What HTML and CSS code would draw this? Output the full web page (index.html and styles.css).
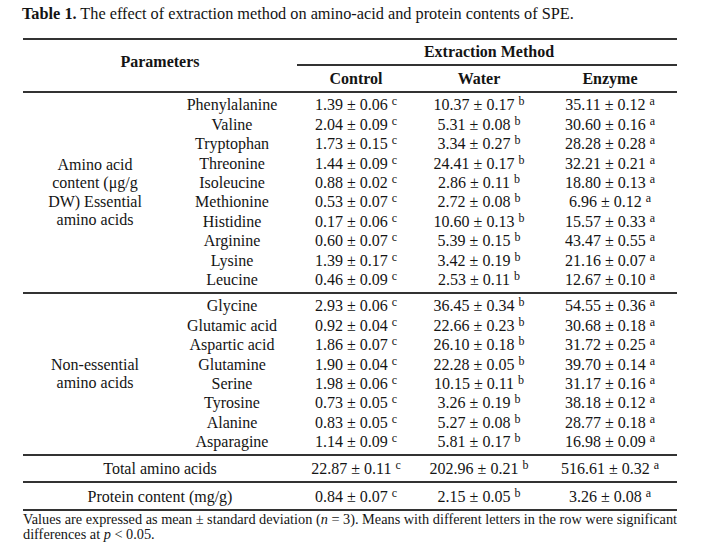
FILE: index.html
```html
<!DOCTYPE html>
<html lang="en">
<head>
    <meta charset="UTF-8">
    <title>Table 1</title>
    <link rel="stylesheet" href="styles.css">
</head>
<body>
    <div class="page">
        <p class="caption"><b>Table 1.</b> The effect of extraction method on amino-acid and protein contents of SPE.</p>

        <table class="data">
            <colgroup>
                <col class="c-group">
                <col class="c-name">
                <col class="c-control">
                <col class="c-water">
                <col class="c-enzyme">
            </colgroup>
            <thead>
                <tr class="head-top">
                    <th colspan="2" rowspan="2" class="params">Parameters</th>
                    <th colspan="3" class="method">Extraction Method</th>
                </tr>
                <tr class="head-sub">
                    <th>Control</th>
                    <th>Water</th>
                    <th>Enzyme</th>
                </tr>
            </thead>
            <tbody class="group-block">
                <tr class="first">
                    <td rowspan="10" class="group">Amino acid<br>content (&mu;g/g<br>DW) Essential<br>amino acids</td>
                    <td>Phenylalanine</td>
                    <td>1.39 &plusmn; 0.06 <sup>c</sup></td>
                    <td>10.37 &plusmn; 0.17 <sup>b</sup></td>
                    <td>35.11 &plusmn; 0.12 <sup>a</sup></td>
                </tr>
                <tr>
                    <td>Valine</td>
                    <td>2.04 &plusmn; 0.09 <sup>c</sup></td>
                    <td>5.31 &plusmn; 0.08 <sup>b</sup></td>
                    <td>30.60 &plusmn; 0.16 <sup>a</sup></td>
                </tr>
                <tr>
                    <td>Tryptophan</td>
                    <td>1.73 &plusmn; 0.15 <sup>c</sup></td>
                    <td>3.34 &plusmn; 0.27 <sup>b</sup></td>
                    <td>28.28 &plusmn; 0.28 <sup>a</sup></td>
                </tr>
                <tr>
                    <td>Threonine</td>
                    <td>1.44 &plusmn; 0.09 <sup>c</sup></td>
                    <td>24.41 &plusmn; 0.17 <sup>b</sup></td>
                    <td>32.21 &plusmn; 0.21 <sup>a</sup></td>
                </tr>
                <tr>
                    <td>Isoleucine</td>
                    <td>0.88 &plusmn; 0.02 <sup>c</sup></td>
                    <td>2.86 &plusmn; 0.11 <sup>b</sup></td>
                    <td>18.80 &plusmn; 0.13 <sup>a</sup></td>
                </tr>
                <tr>
                    <td>Methionine</td>
                    <td>0.53 &plusmn; 0.07 <sup>c</sup></td>
                    <td>2.72 &plusmn; 0.08 <sup>b</sup></td>
                    <td>6.96 &plusmn; 0.12 <sup>a</sup></td>
                </tr>
                <tr>
                    <td>Histidine</td>
                    <td>0.17 &plusmn; 0.06 <sup>c</sup></td>
                    <td>10.60 &plusmn; 0.13 <sup>b</sup></td>
                    <td>15.57 &plusmn; 0.33 <sup>a</sup></td>
                </tr>
                <tr>
                    <td>Arginine</td>
                    <td>0.60 &plusmn; 0.07 <sup>c</sup></td>
                    <td>5.39 &plusmn; 0.15 <sup>b</sup></td>
                    <td>43.47 &plusmn; 0.55 <sup>a</sup></td>
                </tr>
                <tr>
                    <td>Lysine</td>
                    <td>1.39 &plusmn; 0.17 <sup>c</sup></td>
                    <td>3.42 &plusmn; 0.19 <sup>b</sup></td>
                    <td>21.16 &plusmn; 0.07 <sup>a</sup></td>
                </tr>
                <tr class="last">
                    <td>Leucine</td>
                    <td>0.46 &plusmn; 0.09 <sup>c</sup></td>
                    <td>2.53 &plusmn; 0.11 <sup>b</sup></td>
                    <td>12.67 &plusmn; 0.10 <sup>a</sup></td>
                </tr>
            </tbody>
            <tbody class="group-block">
                <tr class="first">
                    <td rowspan="8" class="group">Non-essential<br>amino acids</td>
                    <td>Glycine</td>
                    <td>2.93 &plusmn; 0.06 <sup>c</sup></td>
                    <td>36.45 &plusmn; 0.34 <sup>b</sup></td>
                    <td>54.55 &plusmn; 0.36 <sup>a</sup></td>
                </tr>
                <tr>
                    <td>Glutamic acid</td>
                    <td>0.92 &plusmn; 0.04 <sup>c</sup></td>
                    <td>22.66 &plusmn; 0.23 <sup>b</sup></td>
                    <td>30.68 &plusmn; 0.18 <sup>a</sup></td>
                </tr>
                <tr>
                    <td>Aspartic acid</td>
                    <td>1.86 &plusmn; 0.07 <sup>c</sup></td>
                    <td>26.10 &plusmn; 0.18 <sup>b</sup></td>
                    <td>31.72 &plusmn; 0.25 <sup>a</sup></td>
                </tr>
                <tr>
                    <td>Glutamine</td>
                    <td>1.90 &plusmn; 0.04 <sup>c</sup></td>
                    <td>22.28 &plusmn; 0.05 <sup>b</sup></td>
                    <td>39.70 &plusmn; 0.14 <sup>a</sup></td>
                </tr>
                <tr>
                    <td>Serine</td>
                    <td>1.98 &plusmn; 0.06 <sup>c</sup></td>
                    <td>10.15 &plusmn; 0.11 <sup>b</sup></td>
                    <td>31.17 &plusmn; 0.16 <sup>a</sup></td>
                </tr>
                <tr>
                    <td>Tyrosine</td>
                    <td>0.73 &plusmn; 0.05 <sup>c</sup></td>
                    <td>3.26 &plusmn; 0.19 <sup>b</sup></td>
                    <td>38.18 &plusmn; 0.12 <sup>a</sup></td>
                </tr>
                <tr>
                    <td>Alanine</td>
                    <td>0.83 &plusmn; 0.05 <sup>c</sup></td>
                    <td>5.27 &plusmn; 0.08 <sup>b</sup></td>
                    <td>28.77 &plusmn; 0.18 <sup>a</sup></td>
                </tr>
                <tr class="last">
                    <td>Asparagine</td>
                    <td>1.14 &plusmn; 0.09 <sup>c</sup></td>
                    <td>5.81 &plusmn; 0.17 <sup>b</sup></td>
                    <td>16.98 &plusmn; 0.09 <sup>a</sup></td>
                </tr>
            </tbody>
            <tbody>
                <tr class="summary">
                    <td colspan="2">Total amino acids</td>
                    <td>22.87 &plusmn; 0.11 <sup>c</sup></td>
                    <td>202.96 &plusmn; 0.21 <sup>b</sup></td>
                    <td>516.61 &plusmn; 0.32 <sup>a</sup></td>
                </tr>
                <tr class="summary end">
                    <td colspan="2">Protein content (mg/g)</td>
                    <td>0.84 &plusmn; 0.07 <sup>c</sup></td>
                    <td>2.15 &plusmn; 0.05 <sup>b</sup></td>
                    <td>3.26 &plusmn; 0.08 <sup>a</sup></td>
                </tr>
            </tbody>
        </table>

        <p class="note">Values are expressed as mean &plusmn; standard deviation (<i>n</i> = 3). Means with different letters in the row were significant<br>differences at <i>p</i> &lt; 0.05.</p>
    </div>
</body>
</html>
```

FILE: styles.css
```css
body {
    margin: 0;
    background: #fff;
    color: #141414;
    font-family: "Liberation Serif", "Times New Roman", serif;
}

.page {
    width: 654px;
    padding-left: 23px;
}

.caption {
    margin: 0;
    padding-top: 5px;
    margin-left: -1px;
    font-size: 16.3px;
    line-height: 18px;
    white-space: nowrap;
}

.data {
    width: 654px;
    margin-top: 14.5px;
    border-collapse: separate;
    border-spacing: 0;
    border-top: 2px solid #333;
    font-size: 16px;
    table-layout: fixed;
}

.c-group { width: 144px; }
.c-name { width: 130px; }
.c-control { width: 118px; }
.c-water { width: 128px; }
.c-enzyme { width: 134px; }

.data th,
.data td {
    padding: 0;
    text-align: center;
    white-space: nowrap;
}

.data th {
    font-weight: bold;
    line-height: 19px;
}

.head-top th {
    height: 24.5px;
}

.head-top .params {
    border-bottom: 2px solid #333;
    padding-bottom: 7px;
}

.head-top .method {
    border-bottom: 2px solid #333;
    padding-left: 4px;
}

.head-sub th {
    height: 24.7px;
    border-bottom: 2px solid #333;
}

.group-block td {
    line-height: 19.4px;
}

.group-block .first td {
    padding-top: 2.6px;
}

.group-block .last td {
    padding-bottom: 2.4px;
    border-bottom: 2px solid #333;
}

.data .group {
    padding: 0 0 2px;
    line-height: 18.5px;
    vertical-align: middle;
    border-bottom: 2px solid #333;
}

.summary td {
    height: 25.5px;
    line-height: 19px;
    border-bottom: 2px solid #333;
}

.summary.end td {
    height: 25.3px;
}

.data sup {
    font-size: 12px;
    line-height: 0;
    vertical-align: 0.4em;
}

.note {
    margin: 0;
    padding-top: 1px;
    font-size: 14.3px;
    line-height: 15px;
    white-space: nowrap;
}
```
